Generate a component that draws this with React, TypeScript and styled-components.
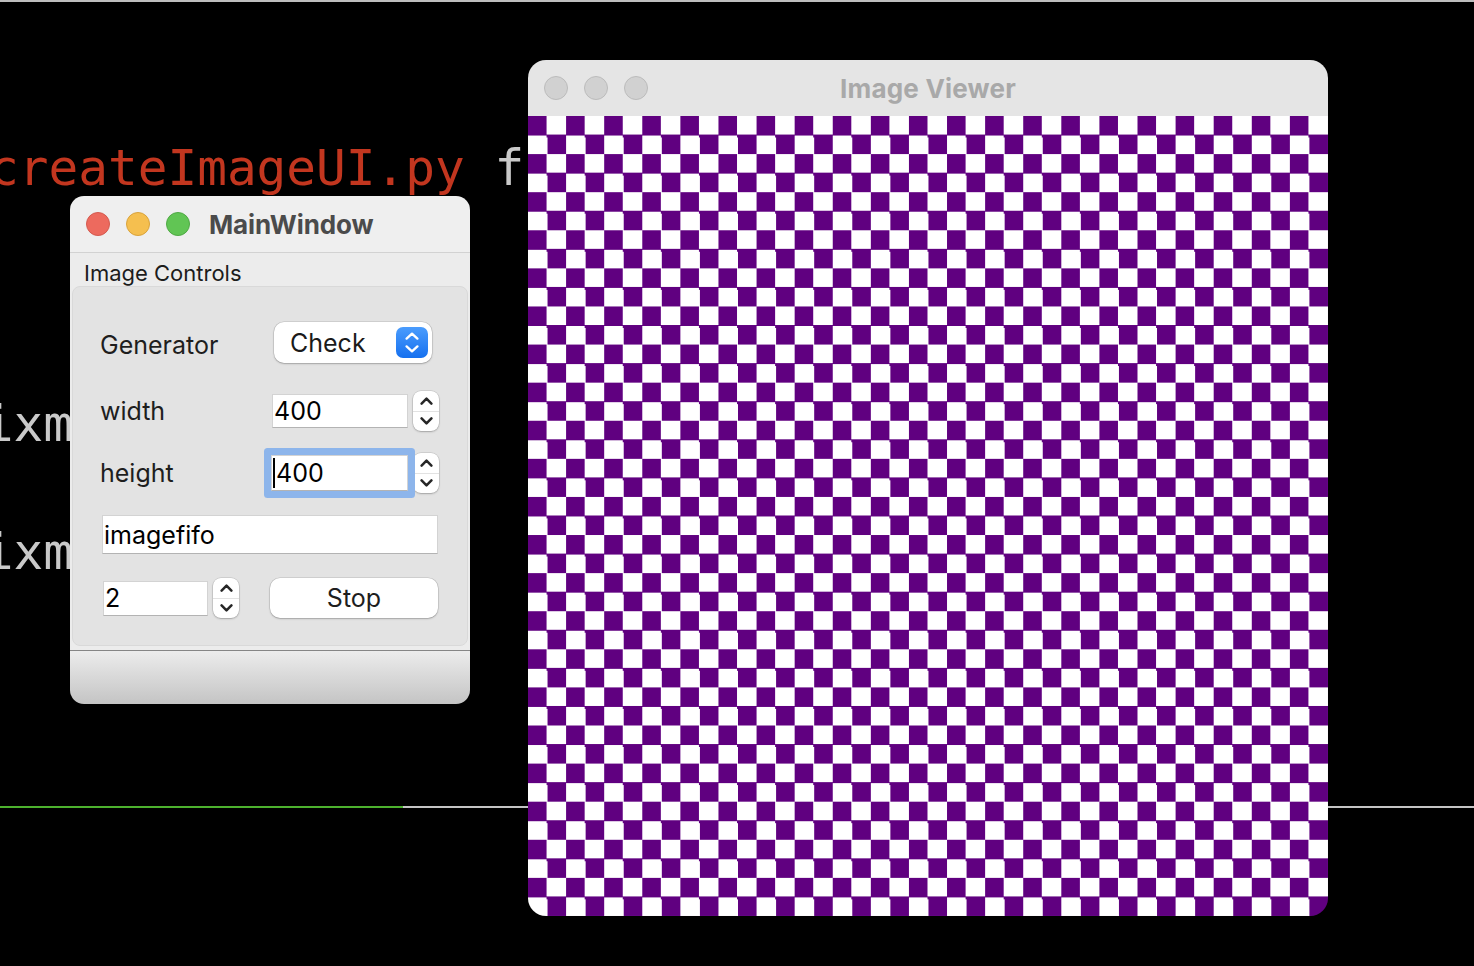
import React from "react";
import styled, { createGlobalStyle } from "styled-components";

const GlobalStyle = createGlobalStyle`
  html, body {
    margin: 0;
    padding: 0;
    background: #000;
  }
  body {
    width: 1474px;
    height: 966px;
    overflow: hidden;
  }
`;

const Desktop = styled.div`
  position: relative;
  width: 1474px;
  height: 966px;
  background: #000;
  overflow: hidden;
`;

// ---- terminal behind the windows ----

const Terminal = styled.div`
  display: flex;
  flex-direction: column;
  height: 100%;
  box-sizing: border-box;
  border-top: 2px solid #bdbdbd;
  padding-top: 134px;
  font-family: "DejaVu Sans Mono", "Liberation Mono", monospace;
  font-size: 49.4px;
  line-height: 64px;
  color: #c9c9c9;
  white-space: pre;
`;

const TermLine = styled.div<{ $indent: number }>`
  height: 64px;
  margin-left: ${(p) => p.$indent}px;
`;

const FileName = styled.span`
  color: #c2361f;
`;

const PaneDivider = styled.div`
  display: flex;
  height: 2px;
  margin-top: 222px;
  background: #c4c4c4;
`;

const ActivePane = styled.div`
  width: 403px;
  background: #4db22e;
`;

// ---- generic window chrome ----

const Window = styled.div<{ $x: number; $y: number; $w: number; $h: number; $radius: number }>`
  position: absolute;
  left: ${(p) => p.$x}px;
  top: ${(p) => p.$y}px;
  width: ${(p) => p.$w}px;
  height: ${(p) => p.$h}px;
  display: flex;
  flex-direction: column;
  border-radius: ${(p) => p.$radius}px;
  overflow: hidden;
  font-family: Inter, "Noto Sans", sans-serif;
`;

const TitleBar = styled.div<{ $active?: boolean }>`
  flex: none;
  height: ${(p) => (p.$active ? 57 : 56)}px;
  box-sizing: border-box;
  display: grid;
  grid-template-columns: ${(p) => (p.$active ? "auto 1fr" : "1fr auto 1fr")};
  align-items: center;
  column-gap: 19px;
  padding: 0 16px;
  background: ${(p) => (p.$active ? "#efefef" : "#e5e5e5")};
  border-bottom: ${(p) => (p.$active ? "1px solid #d2d2d2" : "none")};
`;

const Lights = styled.div`
  display: flex;
  gap: 16px;
`;

const Light = styled.span<{ $fill: string; $edge: string }>`
  width: 24px;
  height: 24px;
  box-sizing: border-box;
  border-radius: 50%;
  background: ${(p) => p.$fill};
  border: 1px solid ${(p) => p.$edge};
`;

const WindowTitle = styled.div<{ $active?: boolean }>`
  font-size: 26px;
  font-weight: 700;
  color: ${(p) => (p.$active ? "#4b4b4b" : "#a9a9a9")};
  letter-spacing: ${(p) => (p.$active ? "-0.1px" : "0.2px")};
`;

// ---- main window contents ----

const MainBody = styled.div`
  flex: none;
  height: 397px;
  display: flex;
  flex-direction: column;
  background: #ececec;
  padding: 0 2px;
`;

const SectionLabel = styled.div`
  height: 33px;
  box-sizing: border-box;
  padding: 7px 0 0 12px;
  font-size: 22px;
  line-height: 26px;
  color: #1c1c1c;
`;

const GroupBox = styled.div`
  height: 360px;
  box-sizing: border-box;
  border: 1px solid #d9d9d9;
  border-radius: 8px;
  background: #e3e3e3;
  padding: 25px 27px 0 27px;
  display: grid;
  grid-template-columns: 170px 170px;
  grid-template-rows: 61px 76px 48px 75px 52px;
  align-items: center;
`;

const FieldLabel = styled.div<{ $nudge?: number }>`
  font-size: 25px;
  color: #1e1e1e;
  padding-top: ${(p) => p.$nudge || 0}px;
`;

const Combo = styled.div`
  margin-left: 4px;
  width: 158px;
  height: 41px;
  box-sizing: border-box;
  display: flex;
  align-items: center;
  justify-content: space-between;
  padding: 0 4px 0 16px;
  background: #fff;
  border-radius: 10px;
  box-shadow: 0 0 0 0.5px rgba(0, 0, 0, 0.16), 0 1px 2px rgba(0, 0, 0, 0.22);
  font-size: 25px;
  color: #1a1a1a;
`;

const ComboArrows = styled.div`
  width: 32px;
  height: 31px;
  border-radius: 7px;
  background: linear-gradient(#4a9cfd, #1570ef);
  display: flex;
  flex-direction: column;
  align-items: center;
  justify-content: center;
  gap: 5px;
`;

const SpinBox = styled.div<{ $left: number }>`
  display: flex;
  align-items: center;
  gap: 5px;
  margin-left: ${(p) => p.$left}px;
`;

const Edit = styled.div<{ $w?: number; $h: number; $focused?: boolean }>`
  position: relative;
  z-index: ${(p) => (p.$focused ? 1 : 0)};
  width: ${(p) => (p.$w ? `${p.$w}px` : "auto")};
  height: ${(p) => p.$h}px;
  box-sizing: border-box;
  display: flex;
  align-items: center;
  padding-left: 1px;
  background: #fff;
  border: 1px solid #d3d3d3;
  border-bottom-color: #b3b3b3;
  font-size: 25px;
  color: #000;
  box-shadow: ${(p) => (p.$focused ? "0 0 0 7px #8db5eb" : "none")};
  border-radius: ${(p) => (p.$focused ? "1px" : "0")};
`;

const WideEdit = styled(Edit)`
  grid-column: 1 / span 2;
  margin: 0 2px;
`;

const Caret = styled.span`
  width: 2px;
  height: 30px;
  margin-right: 1px;
  background: #000;
`;

const SpinButtons = styled.div`
  width: 26px;
  height: 40px;
  border-radius: 8px;
  background: #fff;
  box-shadow: 0 0 0 0.5px rgba(0, 0, 0, 0.16), 0 1px 2px rgba(0, 0, 0, 0.22);
  display: flex;
  flex-direction: column;
  overflow: hidden;
`;

const SpinHalf = styled.div<{ $top?: boolean }>`
  flex: 1;
  display: flex;
  align-items: center;
  justify-content: center;
  border-bottom: ${(p) => (p.$top ? "1px solid #e2e2e2" : "none")};
`;

const PushButton = styled.div`
  width: 168px;
  height: 40px;
  display: flex;
  align-items: center;
  justify-content: center;
  background: #fff;
  border-radius: 10px;
  box-shadow: 0 0 0 0.5px rgba(0, 0, 0, 0.16), 0 1px 2px rgba(0, 0, 0, 0.22);
  font-size: 25px;
  color: #1e1e1e;
`;

const StatusBar = styled.div`
  flex: 1;
  border-top: 1px solid #858585;
  background: linear-gradient(#ececec, #c4c4c4);
`;

// ---- image viewer ----

const Checkerboard = styled.div`
  flex: none;
  width: 800px;
  height: 800px;
  background: repeating-conic-gradient(#ffffff 0 25%, #600080 0 50%) 0 0 / calc(800px / 21) calc(800px / 21);
`;

const Chevron = ({ up, color, w = 13, sw = 2.5 }: { up?: boolean; color: string; w?: number; sw?: number }) => (
  <svg width={w} height={8} viewBox={`0 0 ${w} 8`}>
    <path
      d={up ? `M1.6 6.6 L${w / 2} 1.6 L${w - 1.6} 6.6` : `M1.6 1.4 L${w / 2} 6.4 L${w - 1.6} 1.4`}
      fill="none"
      stroke={color}
      strokeWidth={sw}
      strokeLinecap="round"
      strokeLinejoin="round"
    />
  </svg>
);

const Spinner = () => (
  <SpinButtons>
    <SpinHalf $top>
      <Chevron up color="#262626" />
    </SpinHalf>
    <SpinHalf>
      <Chevron color="#262626" />
    </SpinHalf>
  </SpinButtons>
);

const TrafficLights = ({ active }: { active?: boolean }) => (
  <Lights>
    {active ? (
      <>
        <Light $fill="#ed6a5e" $edge="#d45a4f" />
        <Light $fill="#f5bf4f" $edge="#d9a33c" />
        <Light $fill="#61c554" $edge="#4fa944" />
      </>
    ) : (
      <>
        <Light $fill="#d1d1d1" $edge="#bbbbbb" />
        <Light $fill="#d1d1d1" $edge="#bbbbbb" />
        <Light $fill="#d1d1d1" $edge="#bbbbbb" />
      </>
    )}
  </Lights>
);

export default function App() {
  return (
    <>
      <GlobalStyle />
      <Desktop>
        <Terminal>
          <TermLine $indent={-11}>
            <FileName>createImageUI.py</FileName> from PySide6 import QtGui
          </TermLine>
          <TermLine $indent={0}> </TermLine>
          <TermLine $indent={0}> </TermLine>
          <TermLine $indent={0}> </TermLine>
          <TermLine $indent={-46}>pixmap = image</TermLine>
          <TermLine $indent={0}> </TermLine>
          <TermLine $indent={-46}>pixmap.load()</TermLine>
          <PaneDivider>
            <ActivePane />
          </PaneDivider>
        </Terminal>

        <Window $x={70} $y={196} $w={400} $h={508} $radius={14}>
          <TitleBar $active>
            <TrafficLights active />
            <WindowTitle $active>MainWindow</WindowTitle>
          </TitleBar>
          <MainBody>
            <SectionLabel>Image Controls</SectionLabel>
            <GroupBox>
              <FieldLabel $nudge={4}>Generator</FieldLabel>
              <Combo>
                Check
                <ComboArrows>
                  <Chevron up color="#fff" w={14} sw={2.3} />
                  <Chevron color="#fff" w={14} sw={2.3} />
                </ComboArrows>
              </Combo>

              <FieldLabel>width</FieldLabel>
              <SpinBox $left={2}>
                <Edit $w={136} $h={34}>400</Edit>
                <Spinner />
              </SpinBox>

              <FieldLabel>height</FieldLabel>
              <SpinBox $left={1}>
                <Edit $w={137} $h={36} $focused>
                  <Caret />
                  400
                </Edit>
                <Spinner />
              </SpinBox>

              <WideEdit $h={39}>imagefifo</WideEdit>

              <SpinBox $left={3}>
                <Edit $w={105} $h={35}>2</Edit>
                <Spinner />
              </SpinBox>
              <PushButton>Stop</PushButton>
            </GroupBox>
          </MainBody>
          <StatusBar />
        </Window>

        <Window $x={528} $y={60} $w={800} $h={856} $radius={18}>
          <TitleBar>
            <TrafficLights />
            <WindowTitle>Image Viewer</WindowTitle>
          </TitleBar>
          <Checkerboard />
        </Window>
      </Desktop>
    </>
  );
}
